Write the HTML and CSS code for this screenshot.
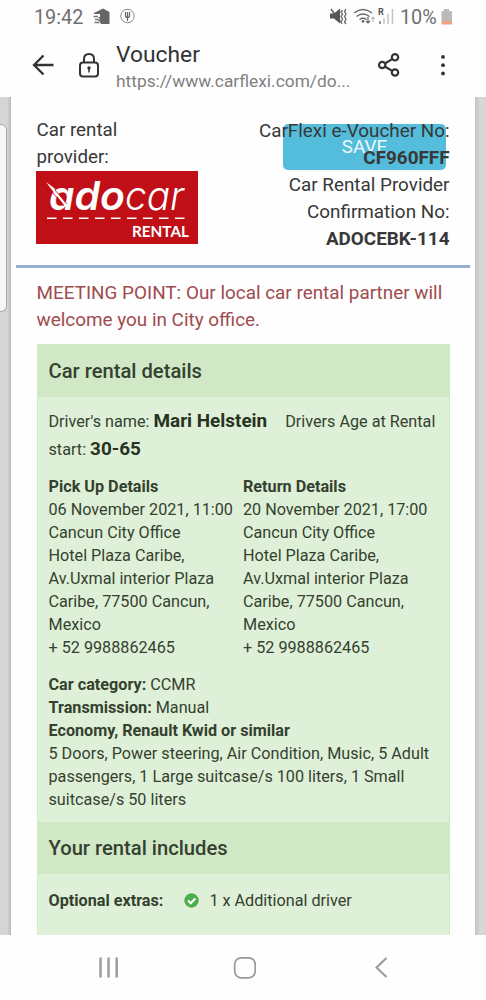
FILE: index.html
```html
<!DOCTYPE html>
<html lang="en">
<head>
<meta charset="utf-8">
<title>Voucher</title>
<link rel="stylesheet" href="styles.css">
</head>
<body>
<div class="phone">
  <header class="chrome">
    <div class="status">
      <span class="clock">19:42</span>
      <svg class="status-left" width="44" height="20" viewBox="0 0 44 20">
        <path d="M1 5 10 .500l6.500 3.500v12H8l-1.500-3H5l2-2-2-2h2V6H1z" fill="#666"/>
        <path d="M.500 8.500H5M2 11.500h4M1.500 14.500h5" stroke="#777" stroke-width="1.500"/>
        <circle cx="34.500" cy="8" r="6.700" fill="none" stroke="#888" stroke-width="1"/>
        <path d="M32.500 4v3.500q0 2 2 2t2-2V4M34.500 4v9" fill="none" stroke="#666" stroke-width="1.200"/>
      </svg>
      <svg class="status-right" width="66" height="20" viewBox="0 0 66 20">
        <path d="M0 5.500h4l6-5V15.500l-6-5H0z" fill="#555"/>
        <path d="M1 1 10.500 14" stroke="#555" stroke-width="1.300"/>
        <g fill="none" stroke="#666" stroke-width="1.300">
          <path d="m12.500 2-1.500 2 1.500 2-1.500 2.500 1.500 2.500-1.500 3 1 2M16 1l-1.500 2.500L16 6l-1.500 2.500L16 11l-1.500 3 1.500 2"/>
          <path d="M24 5q9-7 18 0M26.500 8.500q6.500-5 13 0M29.500 11.500q3.500-2.500 7 0"/>
          <path d="M38 9v6m-2-2 2 2 2-2" stroke-width="1.200"/>
          <path d="M43 14V9m-1.500 2L43 9l1.500 2" stroke-width="1" stroke="#aaa"/>
        </g>
        <circle cx="33" cy="13.300" r="1.400" fill="#666"/>
        <text class="roaming" x="48" y="7">R</text>
        <g stroke-width="1.500" stroke="#c4c4c4"><path d="M50 13v3" stroke="#777"/><path d="M54 10v6M58 6v10M62.500 1v15"/></g>
      </svg>
      <span class="percent">10%</span>
      <svg class="battery" width="12" height="18" viewBox="0 0 12 18">
        <path d="M3 0h5v2h2q1 0 1 1v9H.500V3q0-1 1-1H3z" fill="#bababa"/>
        <path d="M.500 12H11v2.500q0 1-1 1H1.500q-1 0-1-1z" fill="#f2a080"/>
      </svg>
    </div>
    <div class="toolbar">
      <svg class="back" width="24" height="24" viewBox="0 0 24 24"><path d="M22.500 11H3M12.500 1.500 3 11l9.500 9.500" fill="none" stroke="#333" stroke-width="2.300"/></svg>
      <svg class="lock" width="22" height="28" viewBox="0 0 22 28">
        <rect x="2" y="10.500" width="18" height="14" rx="3" fill="none" stroke="#333" stroke-width="2"/>
        <path d="M6 10.500V7q0-5 5-5t5 5v3.500" fill="none" stroke="#333" stroke-width="2"/>
        <circle cx="11" cy="16" r="1.700" fill="#333"/><path d="M11 16v4.500" stroke="#333" stroke-width="1.500"/>
      </svg>
      <div class="page">
        <div class="page-title">Voucher</div>
        <div class="page-url">https://www.carflexi.com/do...</div>
      </div>
      <svg class="share" width="24" height="26" viewBox="0 0 24 26" fill="none" stroke="#333" stroke-width="2.200">
        <circle cx="5.200" cy="12" r="3.200"/><circle cx="18" cy="4.300" r="3.200"/><circle cx="18" cy="19.500" r="3.200"/>
        <path d="m8.200 10.300 7-4.200M8.200 13.700l7 4.200"/>
      </svg>
      <svg class="more" width="6" height="22" viewBox="0 0 6 22" fill="#333"><circle cx="3" cy="1.900" r="1.900"/><circle cx="3" cy="10.200" r="1.900"/><circle cx="3" cy="18.500" r="1.900"/></svg>
    </div>
  </header>

  <main class="viewport">
    <div class="behind"></div>
    <article class="voucher">
      <section class="top">
        <div class="save">SAVE</div>
        <div class="provider">
          <div>Car rental<br>provider:</div>
          <svg class="logo" width="162" height="73" viewBox="0 0 162 73">
            <rect width="162" height="73" fill="#c00f17"/>
            <text class="logo-bold" x="13" y="39" textLength="76" lengthAdjust="spacingAndGlyphs">ado</text>
            <text class="logo-light" x="89" y="39" textLength="59" lengthAdjust="spacingAndGlyphs">car</text>
            <path d="m10 11 8 6 13 17-2 1-13-16z" fill="#fff"/>
            <path d="m19 19 12 14M17 22l11 13" stroke="#c00f17" stroke-width=".800"/>
            <path d="M11 47.300h138" stroke="#fff" stroke-width="1.600" stroke-dasharray="9.500 6.500"/>
            <text class="logo-sub" x="96" y="65.500" textLength="57" lengthAdjust="spacingAndGlyphs">RENTAL</text>
          </svg>
        </div>
        <div class="numbers">CarFlexi e-Voucher No:<br><b>CF960FFF</b><br>Car Rental Provider<br>Confirmation No:<br><b>ADOCEBK-114</b></div>
      </section>
      <p class="meeting">MEETING POINT: Our local car rental partner will<br>welcome you in City office.</p>
      <section class="details">
        <h2 class="heading">Car rental details</h2>
        <div class="block">
          <div class="driver">Driver's name: <b>Mari Helstein</b><span class="age">Drivers Age at Rental</span><br>start: <b>30-65</b></div>
          <div class="places">
            <div><b>Pick Up Details</b><br>06 November 2021, 11:00<br>Cancun City Office<br>Hotel Plaza Caribe,<br>Av.Uxmal interior Plaza<br>Caribe, 77500 Cancun,<br>Mexico<br>+ 52 9988862465</div>
            <div><b>Return Details</b><br>20 November 2021, 17:00<br>Cancun City Office<br>Hotel Plaza Caribe,<br>Av.Uxmal interior Plaza<br>Caribe, 77500 Cancun,<br>Mexico<br>+ 52 9988862465</div>
          </div>
          <div class="car"><b>Car category:</b> CCMR<br><b>Transmission:</b> Manual<br><b>Economy, Renault Kwid or similar</b><br>5 Doors, Power steering, Air Condition, Music, 5 Adult<br>passengers, 1 Large suitcase/s 100 liters, 1 Small<br>suitcase/s 50 liters</div>
        </div>
        <h2 class="heading">Your rental includes</h2>
        <div class="extras">
          <b>Optional extras:</b>
          <svg width="15" height="15" viewBox="0 0 15 15"><circle cx="7.500" cy="7.500" r="7.200" fill="#4cae4c"/><path d="m4 7.500 2.700 2.700L11.300 5.500" fill="none" stroke="#fff" stroke-width="2.200"/></svg>
          <span>1 x Additional driver</span>
        </div>
      </section>
    </article>
  </main>

  <nav class="navbar">
    <svg width="22" height="22" viewBox="0 0 22 22"><path d="M2.500 .500v20M10.500 .500v20M18.700 .500v20" stroke="#999" stroke-width="2.400"/></svg>
    <svg width="24" height="22" viewBox="0 0 24 22"><rect x="1.700" y=".800" width="20.500" height="20" rx="6.500" fill="none" stroke="#999" stroke-width="1.700"/></svg>
    <svg width="14" height="22" viewBox="0 0 14 22"><path d="M12.500 1 2.500 10.500l10 9.500" fill="none" stroke="#999" stroke-width="2"/></svg>
  </nav>
</div>
</body>
</html>
```
FILE: styles.css
```css
* { box-sizing: border-box; }
body { margin: 0; background: #fefefe; font-family: Roboto, sans-serif; color: #383838; }
svg { display: block; flex: none; }
b { font-weight: 700; }
.phone { width: 486px; height: 1000px; display: flex; flex-direction: column; overflow: hidden; }

.chrome { height: 97px; flex: none; }
.status { height: 35px; display: flex; align-items: center; padding-left: 34px; color: #707070; font-size: 19.800px; }
.clock { width: 59px; }
.status-right { margin-left: 193px; }
.roaming { font: 700 9px Roboto, sans-serif; fill: #555; }
.percent { width: 40px; margin-left: 4px; }
.battery { margin-left: 1px; }
.toolbar { height: 63px; display: flex; align-items: center; border-bottom: 1px solid #e6e6e6; padding-left: 31px; }
.lock { margin-left: 23px; }
.page { width: 261px; margin-left: 16px; white-space: nowrap; }
.page-title { font-size: 22.800px; line-height: 30px; color: #333; }
.page-url { font-size: 17.350px; line-height: 23px; color: #808080; }
.more { margin-left: 39px; }

.viewport { height: 838px; flex: none; display: flex; overflow: hidden; background: linear-gradient(90deg, #d6d6d6 0, #d6d6d6 7px, #bdbdbd 11px, #c4c4c4 475px, #d6d6d6 480px); }
.behind { width: 7px; height: 188px; margin: 27px 4px 0 0; background: #f7f7f7; border: 1px solid #aaa; border-left: 0; border-radius: 0 6px 6px 0; }
.voucher { width: 464px; background: #fefefe; }
.top { height: 171px; margin: 0 5px; padding: 20px 20px 0 20.500px; display: flex; justify-content: space-between; border-bottom: 3px solid #93b0d3; font-size: 18.880px; line-height: 27px; position: relative; }
.provider, .numbers { position: relative; }
.provider { font-size: 18.750px; }
.numbers { padding-right: .500px; text-align: right; white-space: nowrap; }
.save { position: absolute; left: 267px; top: 27px; width: 163px; height: 46px; border-radius: 5px; background: #53bddb; color: #eef9fc; text-align: center; line-height: 46px; }
.logo { overflow: visible; margin-left: -.500px; }
.logo-bold { font: italic 600 40px Inter, "Open Sans", sans-serif; font-feature-settings: "cv11"; fill: #fff; }
.logo-light { font: italic 300 40px Inter, "Open Sans", sans-serif; font-feature-settings: "cv11"; fill: #fff; }
.logo-sub { font: 700 16px Lato, sans-serif; fill: #fff; }
.meeting { margin: 11px 0 11px 25.500px; font-size: 18.900px; line-height: 27px; color: #a04b4e; white-space: nowrap; }
.details { width: 413px; margin-left: 25.500px; background: #dff0d8; border: 1px solid #d0e9c6; font-size: 16.200px; line-height: 23px; color: #34412f; white-space: nowrap; }
.heading { margin: 0; height: 52px; padding-left: 11px; background: #d1e8c7; font-size: 20.200px; line-height: 52px; font-weight: 500; }
.block { height: 425px; padding: 10px 0 0 11px; }
.driver { line-height: 27px; }
.driver b { font-size: 18.900px; color: #27331f; }
.age { margin-left: 18px; }
.places { display: grid; grid-template-columns: 194.500px 194px; margin-top: 12px; }
.car { margin-top: 13.500px; }
.extras { height: 120px; padding: 15px 0 0 11px; display: flex; }
.extras svg { margin: 4px 10.500px 0 20.500px; }

.navbar { height: 65px; display: flex; padding: 22px 0 0 98px; background: #fefefe; }
.navbar svg:nth-child(2) { margin-left: 113px; }
.navbar svg:nth-child(3) { margin-left: 117px; }
```
